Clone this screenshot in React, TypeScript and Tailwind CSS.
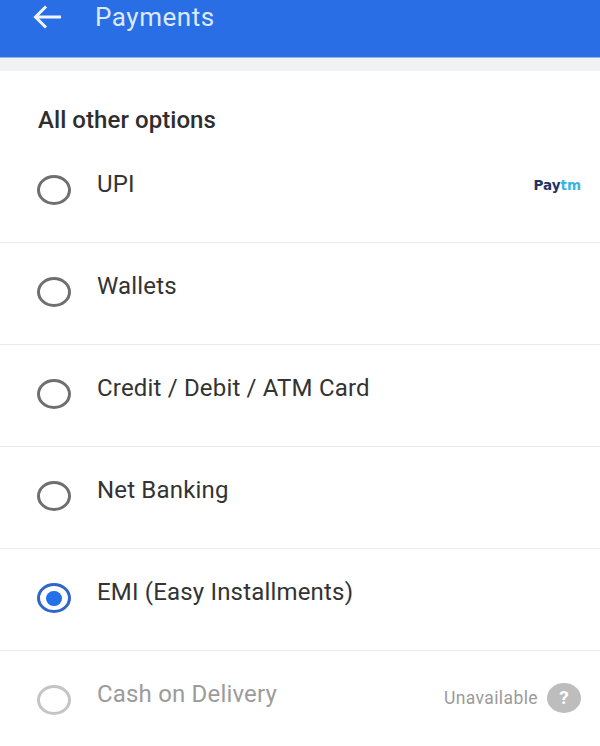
const rows = [
  { label: "UPI" },
  { label: "Wallets" },
  { label: "Credit / Debit / ATM Card" },
  { label: "Net Banking" },
  { label: "EMI (Easy Installments)", selected: true },
  { label: "Cash on Delivery", disabled: true },
];

function Radio({ selected, disabled }: { selected?: boolean; disabled?: boolean }) {
  const color = selected
    ? "border-[#2f66c8]"
    : disabled
      ? "border-[#c4c4c4]"
      : "border-[#6f6f6f]";
  return (
    <div
      className={`w-[34px] h-[30px] rounded-[50%] border-[3px] ${color} flex items-center justify-center shrink-0 mt-[34px]`}
    >
      {selected && <div className="w-[16px] h-[15px] rounded-full bg-[#2470e8]" />}
    </div>
  );
}

export default function App() {
  return (
    <div className="w-[600px] h-[746px] bg-white overflow-hidden font-['Roboto',sans-serif]">
      <header className="h-[58px] bg-[#2a6ee6] flex items-center pl-[33px] pb-[24px] border-b border-[#8fb4ee]">
        <svg width="29" height="24" viewBox="0 0 29 24" fill="none" stroke="#eef5ff" strokeWidth="3" className="shrink-0">
          <path d="M28 12H3M13 1.5 2.5 12 13 22.5" />
        </svg>
        <span className="ml-[33px] text-[26px] tracking-[0.55px] text-[#dbe9fc] leading-none">Payments</span>
      </header>
      <div className="h-[13px] bg-[#f1f2f3]" />
      <div className="h-[69.5px] pl-[38px] pt-[35px]">
        <h2 className="text-[24px] leading-[28px] font-medium tracking-[0.06px] text-[#2e2e2e]">All other options</h2>
      </div>
      {rows.map((r) => (
        <div
          key={r.label}
          className="h-[102.2px] flex items-start pl-[37px] pr-[19px] border-b border-[#e9e9e9] last:border-b-0"
        >
          <Radio selected={r.selected} disabled={r.disabled} />
          <span
            className={`ml-[26px] mt-[29px] text-[24px] leading-[28px] tracking-[0.18px] ${
              r.disabled ? "text-[#9b9b9b]" : "text-[#333333]"
            }`}
          >
            {r.label}
          </span>
          {r.label === "UPI" && (
            <span className="ml-auto mt-[34px] text-[13.5px] leading-[20px] font-bold font-['DejaVu_Sans',sans-serif]">
              <span className="text-[#1f3463]">Pay</span>
              <span className="text-[#37b5e0]">tm</span>
            </span>
          )}
          {r.disabled && (
            <div className="ml-auto mt-[32px] flex items-center">
              <span className="text-[17.5px] leading-[24px] tracking-[0.4px] text-[#9a9a9a]">Unavailable</span>
              <span className="ml-[9px] w-[34px] h-[30px] rounded-[50%] bg-[#bdbdbd] text-white text-[19px] font-bold flex items-center justify-center">
                ?
              </span>
            </div>
          )}
        </div>
      ))}
    </div>
  );
}
